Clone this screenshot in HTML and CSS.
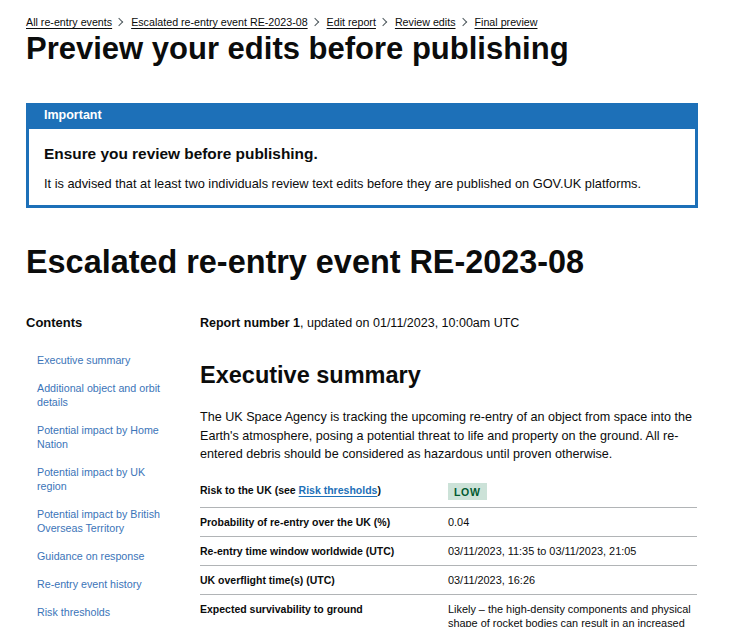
FILE: index.html
```html
<!DOCTYPE html>
<html lang="en">
<head>
<meta charset="utf-8">
<title>Preview your edits before publishing</title>
<link rel="stylesheet" href="styles.css">
</head>
<body>
<div class="page">
  <nav class="breadcrumbs" aria-label="Breadcrumb">
    <ol class="crumbs">
      <li class="crumb"><a class="crumb-link" href="#">All re-entry events</a></li>
      <li class="crumb"><a class="crumb-link" href="#">Escalated re-entry event RE-2023-08</a></li>
      <li class="crumb"><a class="crumb-link" href="#">Edit report</a></li>
      <li class="crumb"><a class="crumb-link" href="#">Review edits</a></li>
      <li class="crumb"><a class="crumb-link" href="#">Final preview</a></li>
    </ol>
  </nav>

  <h1 class="page-title">Preview your edits before publishing</h1>

  <div class="banner" role="region" aria-labelledby="banner-title">
    <div class="banner-header">
      <h2 class="banner-title" id="banner-title">Important</h2>
    </div>
    <div class="banner-content">
      <p class="banner-heading">Ensure you review before publishing.</p>
      <p class="banner-body">It is advised that at least two individuals review text edits before they are published on GOV.UK platforms.</p>
    </div>
  </div>

  <h2 class="event-title">Escalated re-entry event RE-2023-08</h2>

  <div class="layout">
    <aside class="sidebar">
      <h3 class="contents-title">Contents</h3>
      <ul class="toc">
        <li class="toc-item"><a class="toc-link" href="#">Executive summary</a></li>
        <li class="toc-item"><a class="toc-link" href="#">Additional object and orbit details</a></li>
        <li class="toc-item"><a class="toc-link" href="#">Potential impact by Home Nation</a></li>
        <li class="toc-item"><a class="toc-link" href="#">Potential impact by UK region</a></li>
        <li class="toc-item"><a class="toc-link" href="#">Potential impact by British Overseas Territory</a></li>
        <li class="toc-item"><a class="toc-link" href="#">Guidance on response</a></li>
        <li class="toc-item"><a class="toc-link" href="#">Re-entry event history</a></li>
        <li class="toc-item"><a class="toc-link" href="#">Risk thresholds</a></li>
      </ul>
    </aside>

    <main class="main">
      <p class="report-meta"><strong>Report number 1</strong>, updated on 01/11/2023, 10:00am UTC</p>
      <h2 class="section-title">Executive summary</h2>
      <p class="lead">The UK Space Agency is tracking the upcoming re-entry of an object from space into the Earth's atmosphere, posing a potential threat to life and property on the ground. All re-entered debris should be considered as hazardous until proven otherwise.</p>

      <dl class="summary">
        <div class="summary-row">
          <dt class="summary-key">Risk to the UK (see <a class="inline-link" href="#">Risk thresholds</a>)</dt>
          <dd class="summary-value"><span class="tag">Low</span></dd>
        </div>
        <div class="summary-row">
          <dt class="summary-key">Probability of re-entry over the UK (%)</dt>
          <dd class="summary-value">0.04</dd>
        </div>
        <div class="summary-row">
          <dt class="summary-key">Re-entry time window worldwide (UTC)</dt>
          <dd class="summary-value">03/11/2023, 11:35 to 03/11/2023, 21:05</dd>
        </div>
        <div class="summary-row">
          <dt class="summary-key">UK overflight time(s) (UTC)</dt>
          <dd class="summary-value">03/11/2023, 16:26</dd>
        </div>
        <div class="summary-row">
          <dt class="summary-key">Expected survivability to ground</dt>
          <dd class="summary-value">Likely – the high-density components and physical shape of rocket bodies can result in an increased chance of survivability.</dd>
        </div>
      </dl>
    </main>
  </div>
</div>
</body>
</html>
```

FILE: styles.css
```css
* {
  box-sizing: border-box;
}

html,
body {
  margin: 0;
  padding: 0;
}

body {
  font-family: "Liberation Sans", Arial, sans-serif;
  color: #0b0c0c;
  background: #ffffff;
}

.page {
  width: 672px;
  margin-left: 26px;
}

/* Breadcrumbs */
.breadcrumbs {
  padding-top: 15px;
}

.crumbs {
  list-style: none;
  margin: 0;
  padding: 0;
  display: flex;
  align-items: center;
  font-size: 10.7px;
  line-height: 14px;
}

.crumb {
  display: flex;
  align-items: center;
}

.crumb + .crumb::before {
  content: "";
  display: block;
  width: 5px;
  height: 5px;
  border-top: 1px solid #505a5f;
  border-right: 1px solid #505a5f;
  transform: rotate(45deg);
  margin: 0 9px 0 4px;
}

.crumb-link {
  color: #0b0c0c;
  text-decoration: underline;
  text-decoration-thickness: 1px;
  text-underline-offset: 2px;
}

/* Headings */
.page-title {
  font-size: 31px;
  line-height: 36px;
  font-weight: 700;
  margin: 2px 0 36px;
}

/* Notification banner */
.banner {
  border: 3px solid #1d70b8;
  background: #1d70b8;
}

.banner-header {
  padding: 1px 15px 6px;
}

.banner-title {
  margin: 0;
  font-size: 12.5px;
  line-height: 16px;
  font-weight: 700;
  color: #ffffff;
}

.banner-content {
  background: #ffffff;
  padding: 15px 15px 12px;
}

.banner-heading {
  margin: 0 0 11px;
  font-size: 15.4px;
  line-height: 20px;
  font-weight: 700;
}

.banner-body {
  margin: 0;
  font-size: 12.8px;
  line-height: 18px;
}

.event-title {
  font-size: 32.4px;
  line-height: 36px;
  font-weight: 700;
  margin: 36px 0 35px;
}

/* Two column layout */
.layout {
  display: grid;
  grid-template-columns: 174px 498px;
}

.contents-title {
  margin: 0 0 22px;
  font-size: 13px;
  line-height: 16px;
  font-weight: 700;
}

.toc {
  list-style: none;
  margin: 0;
  padding: 0 0 0 11px;
  width: 145px;
}

.toc-item {
  font-size: 10.7px;
  line-height: 14px;
  margin-bottom: 14px;
}

.toc-link {
  color: #3b74b8;
  text-decoration: none;
}

.report-meta {
  margin: 0 0 30px;
  font-size: 12.5px;
  line-height: 16px;
}

.section-title {
  margin: 0 0 19px;
  font-size: 23.5px;
  line-height: 28px;
  font-weight: 700;
}

.lead {
  margin: 0 0 12.5px;
  font-size: 12.6px;
  line-height: 18.5px;
}

/* Summary list */
.summary {
  margin: 0;
  width: 497px;
}

.summary-row {
  display: grid;
  grid-template-columns: 248px 1fr;
  border-bottom: 1px solid #b1b4b6;
}

.summary-key,
.summary-value {
  margin: 0;
  padding: 7px 0;
  line-height: 14px;
}

.summary-key {
  font-size: 10.5px;
  font-weight: 700;
}

.summary-value {
  font-size: 10.9px;
}

.inline-link {
  color: #1d70b8;
  text-decoration: underline;
  text-decoration-thickness: 1px;
  text-underline-offset: 2px;
}

.tag {
  display: inline-block;
  vertical-align: top;
  padding: 3px 6px 2px;
  font-size: 10.5px;
  line-height: 12px;
  font-weight: 700;
  letter-spacing: 0.7px;
  text-transform: uppercase;
  color: #005a30;
  background: #cce2d8;
}
```
